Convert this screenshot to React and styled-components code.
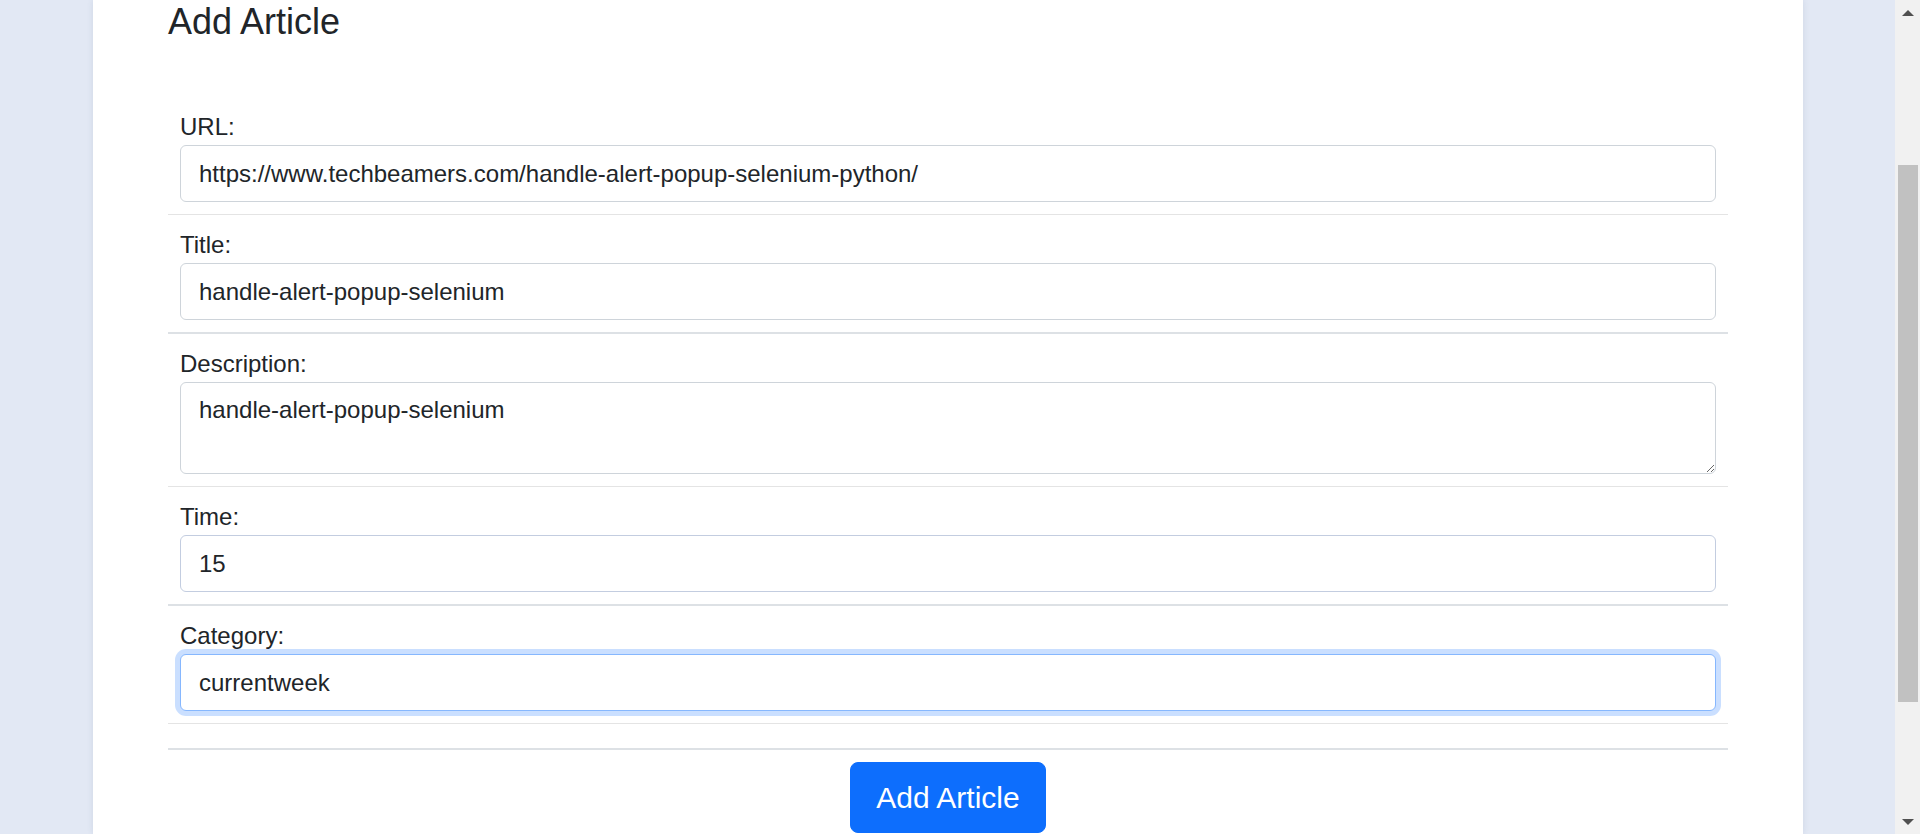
import React from 'react';
import styled, { createGlobalStyle } from 'styled-components';

const GlobalStyle = createGlobalStyle`
  html, body {
    margin: 0;
    padding: 0;
    height: 100%;
    overflow: hidden;
    background: #e2e8f4;
    font-family: "Liberation Sans", Arial, sans-serif;
    color: #212529;
  }
  * { box-sizing: border-box; }
`

const Screen = styled.div`
  display: flex;
  height: 834px;
  width: 1920px;
`

const Page = styled.main`
  flex: 1;
  display: flex;
  padding: 0 92px 0 93px;
  overflow: hidden;
`

const Card = styled.section`
  flex: 1;
  background: #ffffff;
  padding: 0 75px;
  box-shadow: 0 0 6px rgba(60, 80, 120, 0.12);
`

const Heading = styled.h4`
  margin: 0;
  font-size: 36px;
  line-height: 1.2;
  font-weight: 500;
`

const Form = styled.form`
  margin-top: 54px;
  display: flex;
  flex-direction: column;
`

const Item = styled.div`
  padding: 12px;
  border-bottom: ${p => p.$thick ? 2 : 1}px solid ${p => p.$thick ? '#dde1e5' : '#e4e4e4'};
  min-height: ${p => p.$empty ? '24px' : 'auto'};
`

const Label = styled.label`
  display: block;
  font-size: 24px;
  line-height: 36px;
`

const Input = styled.input`
  display: block;
  width: 100%;
  height: 57px;
  padding: 9px 18px;
  font-family: inherit;
  font-size: 24px;
  line-height: 36px;
  color: #212529;
  background: #fff;
  border: 1px solid ${p => p.$tint || '#ced4da'};
  border-radius: 6px;
  outline: none;
  box-shadow: ${p => p.$focused ? '0 0 0 5px rgba(13, 110, 253, 0.22)' : 'none'};
  ${p => p.$focused && 'border-color: #86b7fe;'}
`

const TextArea = styled.textarea`
  display: block;
  width: 100%;
  height: 92px;
  padding: 9px 18px;
  font-family: inherit;
  font-size: 24px;
  line-height: 36px;
  color: #212529;
  border: 1px solid #ced4da;
  border-radius: 6px;
  outline: none;
  resize: vertical;
`

const ButtonRow = styled.div`
  display: flex;
  justify-content: center;
  padding-top: 12px;
`

const PrimaryButton = styled.button`
  font-family: inherit;
  font-size: 30px;
  line-height: 45px;
  padding: 12px 25px;
  color: #fff;
  background: #0d6efd;
  border: 1px solid #0d6efd;
  border-radius: 8px;
  cursor: pointer;
`

const Scrollbar = styled.div`
  width: 25px;
  display: flex;
  flex-direction: column;
  background: #f1f1f1;
`

const Arrow = styled.div`
  height: 25px;
  display: flex;
  align-items: center;
  justify-content: center;
`

const Track = styled.div`
  flex: 1;
  padding: ${p => p.$before}px 2px 0 3px;
`

const Thumb = styled.div`
  height: ${p => p.$size}px;
  background: #c1c1c1;
`

const Triangle = ({ down }) => (
  <svg width="12" height="8" viewBox="0 0 12 8">
    <polygon points={down ? '0,1 12,1 6,7' : '0,7 12,7 6,1'} fill="#505050" />
  </svg>
)

const fields = [
  { label: 'URL:', value: 'https://www.techbeamers.com/handle-alert-popup-selenium-python/' },
  { label: 'Title:', value: 'handle-alert-popup-selenium', thick: true },
  { label: 'Description:', value: 'handle-alert-popup-selenium', area: true },
  { label: 'Time:', value: '15', thick: true, tint: '#c3cde0' },
  { label: 'Category:', value: 'currentweek', focused: true },
]

export default function App() {
  return (
    <>
      <GlobalStyle />
      <Screen>
        <Page>
          <Card>
            <Heading>Add Article</Heading>
            <Form onSubmit={e => e.preventDefault()}>
              {fields.map(f => (
                <Item key={f.label} $thick={f.thick}>
                  <Label>{f.label}</Label>
                  {f.area
                    ? <TextArea defaultValue={f.value} />
                    : <Input defaultValue={f.value} $tint={f.tint} $focused={f.focused} />}
                </Item>
              ))}
              <Item $thick $empty />
              <ButtonRow>
                <PrimaryButton type="submit">Add Article</PrimaryButton>
              </ButtonRow>
            </Form>
          </Card>
        </Page>
        <Scrollbar>
          <Arrow><Triangle /></Arrow>
          <Track $before={140}>
            <Thumb $size={537} />
          </Track>
          <Arrow><Triangle down /></Arrow>
        </Scrollbar>
      </Screen>
    </>
  )
}
